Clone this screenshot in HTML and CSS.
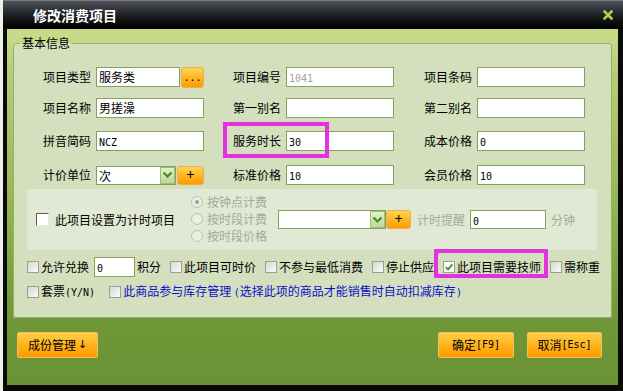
FILE: index.html
```html
<!DOCTYPE html>
<html lang="zh-CN">
<head>
<meta charset="utf-8">
<title>修改消费项目</title>
<link rel="stylesheet" href="styles.css">
</head>
<body>
<div class="window">
  <div class="titlebar">
    <span class="title">修改消费项目</span>
    <svg class="close" width="10" height="10" viewBox="0 0 10 10"><path d="M1.5 1.5 L8.5 8.5 M8.5 1.5 L1.5 8.5" stroke="#a8d450" stroke-width="2.6" stroke-linecap="square"/></svg>
  </div>
  <div class="body">
    <fieldset class="group">
      <legend>基本信息</legend>
      <div class="row r1">
        <div class="cell"><span class="lbl">项目类型</span><div class="field short">服务类</div><span class="obtn dots">...</span></div>
        <div class="cell c2"><span class="lbl">项目编号</span><div class="field gray"><span class="num">1041</span></div></div>
        <div class="cell"><span class="lbl">项目条码</span><div class="field"></div></div>
      </div>
      <div class="row r2">
        <div class="cell"><span class="lbl">项目名称</span><div class="field">男搓澡</div></div>
        <div class="cell c2"><span class="lbl">第一别名</span><div class="field"></div></div>
        <div class="cell"><span class="lbl">第二别名</span><div class="field"></div></div>
      </div>
      <div class="row r3">
        <div class="cell"><span class="lbl">拼音简码</span><div class="field"><span class="num">NCZ</span></div></div>
        <div class="cell c2 mark1"><span class="lbl">服务时长</span><div class="field"><span class="num">30</span></div></div>
        <div class="cell"><span class="lbl">成本价格</span><div class="field"><span class="num">0</span></div></div>
      </div>
      <div class="row r4">
        <div class="cell"><span class="lbl">计价单位</span><div class="combo"><span class="combo-text">次</span><span class="dd"><svg width="11" height="8" viewBox="0 0 11 8"><path d="M1.5 1.5 L5.5 5.5 L9.5 1.5" fill="none" stroke="#3f8d1f" stroke-width="2.2"/></svg></span></div><span class="obtn plus">+</span></div>
        <div class="cell c2"><span class="lbl">标准价格</span><div class="field"><span class="num">10</span></div></div>
        <div class="cell"><span class="lbl">会员价格</span><div class="field"><span class="num">10</span></div></div>
      </div>
      <div class="timer">
        <div class="tcheck"><span class="cb sunken"></span><span>此项目设置为计时项目</span></div>
        <div class="radios">
          <div class="radio"><span class="rd on"></span>按钟点计费</div>
          <div class="radio"><span class="rd"></span>按时段计费</div>
          <div class="radio"><span class="rd"></span>按时段价格</div>
        </div>
        <div class="combo wide"><span class="combo-text"></span><span class="dd"><svg width="11" height="8" viewBox="0 0 11 8"><path d="M1.5 1.5 L5.5 5.5 L9.5 1.5" fill="none" stroke="#3f8d1f" stroke-width="2.2"/></svg></span></div>
        <span class="obtn plus small">+</span>
        <span class="dim remind">计时提醒</span>
        <div class="field mins"><span class="num">0</span></div>
        <span class="dim minute">分钟</span>
      </div>
      <div class="checks">
        <div class="item"><span class="cb"></span><span>允许兑换</span><div class="field pts"><span class="num">0</span></div><span class="unit">积分</span></div>
        <div class="item"><span class="cb"></span><span>此项目可时价</span></div>
        <div class="item"><span class="cb"></span><span>不参与最低消费</span></div>
        <div class="item"><span class="cb"></span><span>停止供应</span></div>
        <div class="item mark2"><span class="cb checked"><svg width="10" height="10" viewBox="0 0 10 10"><path d="M1.8 5 L4 7.4 L8.4 2.4" fill="none" stroke="#2f9a1c" stroke-width="1.8"/></svg></span><span>此项目需要技师</span></div>
        <div class="item"><span class="cb"></span><span>需称重</span></div>
      </div>
      <div class="checks second">
        <div class="item"><span class="cb"></span><span>套票<span class="mono">(Y/N)</span></span></div>
        <div class="item blue"><span class="cb"></span><span>此商品参与库存管理 <span class="mono">(</span>选择此项的商品才能销售时自动扣减库存<span class="mono">)</span></span></div>
      </div>
    </fieldset>
    <div class="actions">
      <span class="btn parts">成份管理<span class="arrow">↓</span></span>
      <span class="btn ok">确定<span class="mono">[F9]</span></span>
      <span class="btn cancel">取消<span class="mono">[Esc]</span></span>
    </div>
  </div>
</div>
</body>
</html>
```
FILE: styles.css
```css
*, *::before, *::after { box-sizing: border-box; }
html, body { margin: 0; padding: 0; }
body {
  width: 623px;
  height: 391px;
  overflow: hidden;
  background: #eef0ea;
  font-family: "Noto Sans CJK SC", sans-serif;
  font-size: 12px;
  line-height: 16px;
  color: #000;
}
.window {
  margin-left: 3px;
  width: 620px;
  height: 391px;
  background: #0a0a0a;
  display: flex;
  flex-direction: column;
}
.titlebar {
  height: 29px;
  flex: none;
  display: flex;
  align-items: center;
  padding-left: 30px;
  border-top: 1px solid #777b80;
  background: linear-gradient(#4e5257 0%, #2b2e32 35%, #101113 70%, #000 100%);
}
.title {
  color: #fff;
  font-weight: bold;
  font-size: 14px;
}
.close { margin-left: auto; margin-right: 10px; }
.body {
  flex: 1;
  margin: 0 5px 6px 4px;
  padding: 6px 6px 0 6px;
  background: linear-gradient(#c8d987 0px, #c8d987 7px, #b8cd78 12%, #9ab85a 45%, #79a03f 72%, #6e9536 85%, #6b9234 100%);
  display: flex;
  flex-direction: column;
}
.group {
  margin: 0;
  padding: 16px 0 17px 0;
  min-width: 0;
  border: 1px solid #97b163;
  border-radius: 3px;
  background: #d4dfbe;
}
.group legend {
  margin-left: 6px;
  padding: 0 2px;
  font-size: 12px;
  line-height: 16px;
}
.row {
  display: grid;
  grid-template-columns: 190px 191px 1fr;
  padding-left: 29px;
  height: 20px;
  align-items: center;
}
.r2 { margin-top: 11px; }
.r3 { margin-top: 13px; }
.r4 { margin-top: 14px; }
.cell { display: flex; align-items: center; position: relative; height: 20px; }
.lbl { width: 48px; margin-right: 5px; white-space: nowrap; }
.field {
  width: 108px;
  height: 20px;
  border: 1px solid #86a25a;
  background: #fff;
  padding: 0 2px;
  line-height: 18px;
  white-space: nowrap;
  overflow: hidden;
}
.field.short { width: 84px; }
.field.gray { color: #a0a0a0; }
.num, .mono {
  font-family: "DejaVu Sans Mono", "Liberation Mono", monospace;
  font-size: 10px;
}
.obtn {
  display: inline-flex;
  align-items: center;
  justify-content: center;
  background: linear-gradient(#ffd458 0%, #ffb622 50%, #ff9c00 100%);
  border: 1px solid #eab04a;
  border-radius: 3px;
  color: #000;
}
.obtn.dots {
  width: 23px;
  height: 21px;
  margin-left: 1px;
  font-family: "DejaVu Sans Mono", monospace;
  font-size: 10px;
  align-items: flex-start;
  padding-top: 2px;
}
.obtn.plus {
  width: 27px;
  height: 19px;
  margin-left: 1px;
  font-size: 14px;
  line-height: 14px;
  padding-bottom: 3px;
}
.obtn.plus.small { width: 25px; margin-left: 0; }
.combo {
  width: 80px;
  height: 19px;
  border: 1px solid #86a25a;
  background: #fff;
  display: flex;
  align-items: stretch;
}
.combo-text { flex: 1; padding-left: 2px; line-height: 17px; }
.dd {
  width: 15px;
  background: linear-gradient(#e2f0cf, #bcd99a);
  border: 1px solid #9dbf78;
  display: flex;
  align-items: center;
  justify-content: center;
}
.combo.wide { width: 108px; }
.mark1::after {
  content: "";
  position: absolute;
  left: -10px;
  top: -9px;
  width: 106px;
  height: 36px;
  border: 4px solid #e232e0;
}
.timer {
  margin: 4px 14px 0 13px;
  height: 61px;
  background: #e1e8d3;
  display: flex;
  align-items: center;
  padding-left: 9px;
}
.tcheck { display: flex; align-items: center; margin-right: 16px; }
.tcheck .cb { margin-right: 6px; }
.radios { display: flex; flex-direction: column; color: #a3aa9b; line-height: 17px; margin-right: 11px; margin-top: -2px; }
.radio { display: flex; align-items: center; }
.rd {
  width: 12px;
  height: 12px;
  border-radius: 50%;
  border: 1px solid #b9bfb2;
  background: #eceee6;
  margin-right: 4px;
  position: relative;
}
.rd.on::after {
  content: "";
  position: absolute;
  left: 3px; top: 3px;
  width: 4px; height: 4px;
  border-radius: 50%;
  background: #9aa093;
}
.dim { color: #a3aa9b; }
.remind { margin-left: 6px; }
.field.mins { width: 76px; height: 19px; margin-left: 5px; line-height: 17px; }
.minute { margin-left: 5px; }
.checks {
  display: flex;
  align-items: center;
  gap: 9px;
  margin: 7px 0 0 13px;
  height: 20px;
}
.checks.second { height: 16px; gap: 14px; }
.item { display: flex; align-items: center; white-space: nowrap; position: relative; }
.cb {
  width: 12px;
  height: 12px;
  flex: none;
  border: 1px solid #9c9c98;
  background: linear-gradient(135deg, #d8d8d0, #fbfbf8);
  margin-right: 2px;
  display: inline-flex;
  align-items: center;
  justify-content: center;
}
.cb.sunken {
  width: 13px;
  height: 13px;
  border-color: #5c5c5c #e8e8e8 #e8e8e8 #5c5c5c;
  background: #fff;
}
.cb.checked { background: #fff; }
.field.pts { width: 41px; margin-left: 5px; }
.unit { margin-left: 2px; }
.mark2::after {
  content: "";
  position: absolute;
  left: -9px;
  top: -10px;
  width: 114px;
  height: 29px;
  border: 4px solid #e232e0;
}
.blue { color: #0a10c8; }
.actions {
  display: flex;
  align-items: center;
  margin-top: 14px;
  padding: 0 10px 0 4px;
}
.btn {
  height: 26px;
  display: inline-flex;
  align-items: center;
  justify-content: center;
  background: linear-gradient(#ffd04a 0%, #ffb31c 50%, #ff9900 100%);
  border: 1px solid #f2c25a;
  border-radius: 2px;
  color: #000;
  font-size: 12px;
}
.btn.parts { width: 81px; }
.arrow { margin-left: 2px; font-family: "DejaVu Sans", sans-serif; font-size: 11px; }
.btn.ok { width: 76px; margin-left: auto; }
.btn.cancel { width: 75px; margin-left: 13px; }
```
